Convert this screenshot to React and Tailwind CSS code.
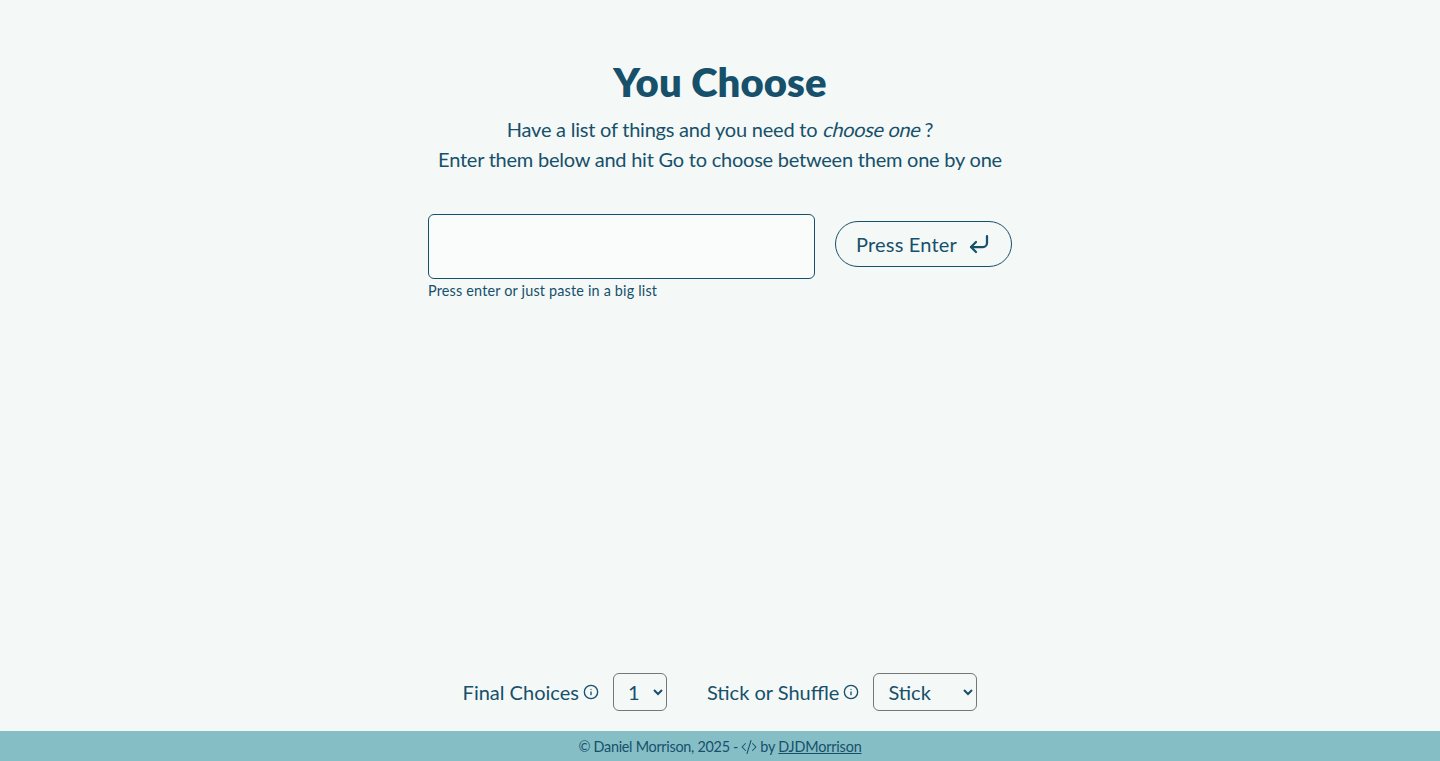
import { useState } from 'react';
import { CornerDownLeft, Info } from 'lucide-react';
import { BsCodeSlash } from 'react-icons/bs';

export default function App() {
  const [item, setItem] = useState('');

  return (
    <div className="min-h-screen flex flex-col bg-[#f4f8f7] text-[#16506b] font-['Lato',sans-serif]">
      <main className="flex-1 flex flex-col items-center pt-[56px]">
        <h1 className="text-[40px] leading-[52px] font-extrabold tracking-[0.1px]">You Choose</h1>
        <p className="mt-[6px] text-[20px] leading-[30px] text-center tracking-[-0.23px]">
          Have a list of things and you need to{' '}
          <span className="inline-block ml-[2px] -skew-x-[14deg] tracking-[-0.35px]">choose one</span>
          <span className="ml-[3px]">?</span>
          <br />
          Enter them below and hit Go to choose between them one by one
        </p>

        <div className="mt-[40px] flex items-start gap-5 w-[584px]">
          <div className="w-[387px]">
            <input
              type="text"
              value={item}
              onChange={(e) => setItem(e.target.value)}
              className="block w-full h-[65px] px-3 bg-[#f9fcfb] border border-[#16506b] rounded-md text-[20px] outline-none"
            />
            <div className="mt-[3px] text-[14.4px] leading-[18px] tracking-[0.18px]">Press enter or just paste in a big list</div>
          </div>
          <button className="mt-[7px] w-[177px] h-[46px] flex items-center justify-center gap-2.5 border border-[#16506b] rounded-full text-[20px] tracking-[0.2px]">
            Press Enter
            <CornerDownLeft size={24} strokeWidth={2.25} />
          </button>
        </div>
      </main>

      <div className="flex justify-center items-center gap-10 pb-5 text-[20px]">
        <div className="flex items-center">
          <span>Final Choices</span>
          <Info size={16} className="ml-1" />
          <select className="ml-[14px] w-[54px] h-[38px] pl-2.5 border border-[#767676] rounded-md">
            <option>1</option>
            <option>2</option>
            <option>3</option>
          </select>
        </div>
        <div className="flex items-center">
          <span>Stick or Shuffle</span>
          <Info size={16} className="ml-1" />
          <select className="ml-[14px] w-[104px] h-[38px] pl-2.5 border border-[#767676] rounded-md">
            <option>Stick</option>
            <option>Shuffle</option>
          </select>
        </div>
      </div>

      <footer className="h-[30px] pt-0.5 flex items-center justify-center gap-[3px] bg-[#86bec6] text-[14.4px]">
        <span className="tracking-[-0.28px]">© Daniel Morrison, 2025 -</span>
        <BsCodeSlash size={16} />
        <span className="tracking-[-0.17px]">
          by <a href="#" className="underline">DJDMorrison</a>
        </span>
      </footer>
    </div>
  );
}
